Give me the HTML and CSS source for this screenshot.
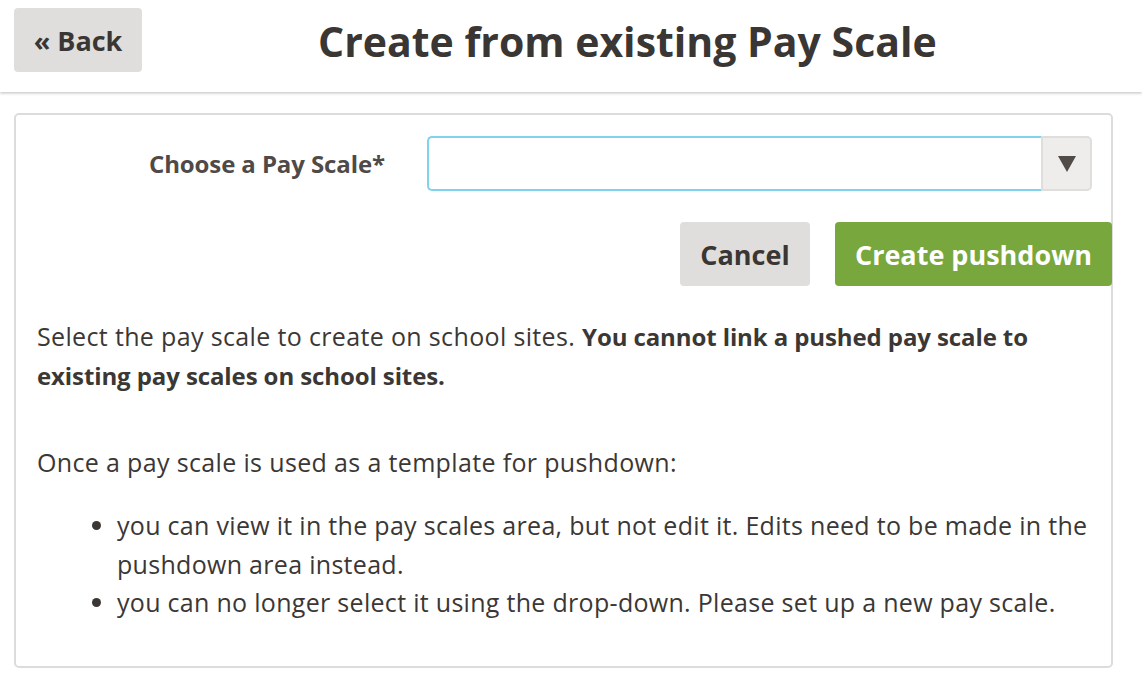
FILE: index.html
```html
<!DOCTYPE html>
<html lang="en">
<head>
<meta charset="utf-8">
<title>Create from existing Pay Scale</title>
<link rel="stylesheet" href="styles.css">
</head>
<body>
<header class="topbar">
  <a class="btn btn-back" href="#">« Back</a>
  <h1 class="title">Create from existing Pay Scale</h1>
</header>
<main class="content">
  <section class="card">
    <form class="form">
      <div class="form-row">
        <label class="form-label">Choose a Pay Scale*</label>
        <div class="select">
          <div class="select-input"></div>
          <div class="select-arrow"><span class="tri"></span></div>
        </div>
      </div>
      <div class="actions">
        <button type="button" class="btn btn-cancel">Cancel</button>
        <button type="button" class="btn btn-primary">Create pushdown</button>
      </div>
    </form>
    <p class="text">Select the pay scale to create on school sites. <strong class="strong">You cannot link a pushed pay scale to existing pay scales on school sites.</strong></p>
    <p class="text">Once a pay scale is used as a template for pushdown:</p>
    <ul class="list">
      <li>you can view it in the pay scales area, but not edit it. Edits need to be made in the pushdown area instead.</li>
      <li>you can no longer select it using the drop-down. Please set up a new pay scale.</li>
    </ul>
  </section>
</main>
</body>
</html>
```
FILE: styles.css
```css
* { box-sizing: border-box; }
html, body { margin: 0; padding: 0; }
body {
  font-family: "Open Sans", "Noto Sans", "Liberation Sans", sans-serif;
  color: #3b3735;
  background: #fff;
  width: 1142px;
  height: 682px;
  overflow: hidden;
}
.topbar {
  display: flex;
  align-items: center;
  height: 92px;
  padding: 0 14px;
  background: #fff;
  box-shadow: 0 1px 3px rgba(0,0,0,0.18), 0 2px 2px rgba(0,0,0,0.06);
  position: relative;
}
.btn {
  display: inline-flex;
  align-items: center;
  justify-content: center;
  border: none;
  border-radius: 4px;
  font-family: inherit;
  font-weight: 700;
  text-decoration: none;
  cursor: pointer;
}
.btn-back {
  width: 128px;
  height: 64px;
  margin-top: -12px;
  background: #dfdedd;
  color: #3a3634;
  font-size: 27px;
}
.title {
  margin: -11px 0 0 176px;
  font-size: 41px;
  font-weight: 700;
  color: #3a3634;
}
.content {
  padding: 21px 29px 0 14px;
}
.card {
  background: #fff;
  border: 2px solid #dcdcdc;
  border-radius: 5px;
  height: 555px;
  padding: 21px 0 0 21px;
}
.form-row {
  display: flex;
  align-items: center;
}
.form-label {
  width: 348px;
  text-align: right;
  font-size: 24px;
  font-weight: 700;
  color: #4f4a47;
  letter-spacing: -0.1px;
}
.select {
  display: flex;
  margin-left: 42px;
  width: 665px;
  height: 55px;
}
.select-input {
  flex: 1;
  border: 2px solid #7fd3ee;
  border-right: none;
  border-radius: 5px 0 0 5px;
  background: #fff;
}
.select-arrow {
  width: 51px;
  background: #eeedec;
  border: 2px solid #dfdedd;
  border-radius: 0 5px 5px 0;
  display: flex;
  align-items: center;
  justify-content: center;
}
.tri {
  width: 0;
  height: 0;
  border-left: 9px solid transparent;
  border-right: 9px solid transparent;
  border-top: 16px solid #524c49;
}
.actions {
  display: flex;
  justify-content: flex-end;
  gap: 25px;
  margin-top: 31px;
  margin-right: -1px;
}
.btn-cancel {
  width: 130px;
  height: 64px;
  background: #dfdedd;
  color: #3a3634;
  font-size: 27px;
}
.btn-primary {
  width: 277px;
  height: 64px;
  background: #77a73d;
  color: #fff;
  font-size: 27px;
}
.text {
  margin: 31px 0 0;
  padding-right: 14px;
  font-size: 25px;
  line-height: 39px;
  letter-spacing: 0.35px;
}
.strong {
  font-size: 24px;
  font-weight: 700;
  letter-spacing: -0.1px;
}
.text + .text { margin-top: 48px; }
.list {
  margin: 24px 0 0;
  padding-left: 80px;
  padding-right: 14px;
  font-size: 25px;
  line-height: 39px;
  letter-spacing: 0.3px;
}
.list li { line-height: 38.5px; }
```
